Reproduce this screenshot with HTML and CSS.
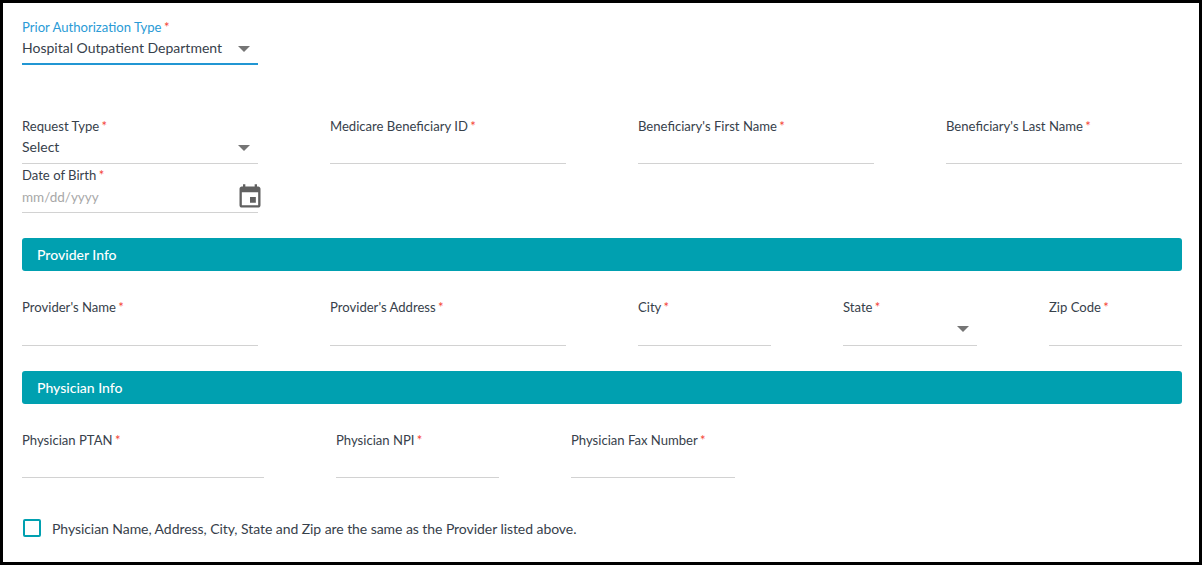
FILE: index.html
```html
<!DOCTYPE html>
<html lang="en">

<head>
    <meta charset="UTF-8">
    <title>Prior Authorization</title>
    <link rel="stylesheet" href="styles.css">
</head>

<body>

    <form class="page">
        <div class="field field-type">
            <label class="label-active">Prior Authorization Type <span class="req">*</span></label>
            <div class="control control-active">
                <span>Hospital Outpatient Department</span>
                <i class="arrow"></i>
            </div>
        </div>

        <div class="row-four row-request">
            <div class="field">
                <label>Request Type <span class="req">*</span></label>
                <div class="control"><span>Select</span><i class="arrow"></i></div>
            </div>
            <div class="field">
                <label>Medicare Beneficiary ID <span class="req">*</span></label>
                <div class="control"><input type="text"></div>
            </div>
            <div class="field">
                <label>Beneficiary's First Name <span class="req">*</span></label>
                <div class="control"><input type="text"></div>
            </div>
            <div class="field">
                <label>Beneficiary's Last Name <span class="req">*</span></label>
                <div class="control"><input type="text"></div>
            </div>
            <div class="field field-dob">
                <label>Date of Birth <span class="req">*</span></label>
                <div class="control">
                    <input type="text" placeholder="mm/dd/yyyy">
                    <svg class="calendar" viewBox="0 0 24 24" width="28" height="28">
                        <path d="M17 12h-5v5h5v-5zM16 1v2H8V1H6v2H5c-1.11 0-1.99.9-1.99 2L3 19c0 1.1.89 2 2 2h14c1.1 0 2-.9 2-2V5c0-1.1-.9-2-2-2h-1V1h-2zm3 18H5V8h14v11z" />
                    </svg>
                </div>
            </div>
        </div>

        <h3 class="section-bar bar-provider">Provider Info</h3>

        <div class="row-provider">
            <div class="field">
                <label>Provider's Name <span class="req">*</span></label>
                <div class="control"><input type="text"></div>
            </div>
            <div class="field">
                <label>Provider's Address <span class="req">*</span></label>
                <div class="control"><input type="text"></div>
            </div>
            <div class="field">
                <label>City <span class="req">*</span></label>
                <div class="control"><input type="text"></div>
            </div>
            <div class="field">
                <label>State <span class="req">*</span></label>
                <div class="control"><span></span><i class="arrow"></i></div>
            </div>
            <div class="field">
                <label>Zip Code <span class="req">*</span></label>
                <div class="control"><input type="text"></div>
            </div>
        </div>

        <h3 class="section-bar bar-physician">Physician Info</h3>

        <div class="row-physician">
            <div class="field">
                <label>Physician PTAN <span class="req">*</span></label>
                <div class="control"><input type="text"></div>
            </div>
            <div class="field">
                <label>Physician NPI <span class="req">*</span></label>
                <div class="control"><input type="text"></div>
            </div>
            <div class="field">
                <label>Physician Fax Number <span class="req">*</span></label>
                <div class="control"><input type="text"></div>
            </div>
        </div>

        <label class="same-as">
            <i class="check-box"></i>
            Physician Name, Address, City, State and Zip are the same as the Provider listed above.
        </label>
    </form>

</body>

</html>
```

FILE: styles.css
```css
* {
    margin: 0;
    padding: 0;
    box-sizing: border-box;
}

body {
    font-family: 'Lato', sans-serif;
    font-size: 14px;
    color: #37414b;
    background: white;
}

.page {
    width: 1202px;
    height: 565px;
    border: 3px solid black;
    padding: 14px 17px 0 19px;
    overflow: hidden;
}

.field {
    display: flex;
    flex-direction: column;
    height: 48px;
}

.field label {
    height: 20px;
    font-size: 13.1px;
    line-height: 20px;
    white-space: nowrap;
}

.req {
    color: #f44336;
    margin-left: -1px;
}

.control {
    flex: 1;
    display: flex;
    justify-content: space-between;
    align-items: flex-start;
    border-bottom: 1px solid #d2d2d2;
    line-height: 22px;
}

.control input {
    width: 100%;
    border: none;
    outline: none;
    height: 23px;
    font: inherit;
    color: inherit;
    background: none;
}

.control input::placeholder {
    color: #a8a8a8;
    font-size: 13.5px;
    opacity: 1;
}

.field-type {
    width: 236px;
}

.label-active {
    color: #2a9bd6;
}

.control-active {
    border-bottom: 2px solid #2196d3;
}

.arrow {
    width: 0;
    height: 0;
    margin: 9px 8px 0 0;
    border-left: 6px solid transparent;
    border-right: 6px solid transparent;
    border-top: 6px solid #757575;
}

.calendar {
    flex: none;
    margin: -2px -6px 0 0;
    fill: #616161;
}

.row-four {
    display: grid;
    grid-template-columns: repeat(4, 236px);
    column-gap: 72px;
    row-gap: 1px;
    margin-top: 51px;
}

.section-bar {
    height: 33px;
    line-height: 33px;
    padding-left: 15px;
    background: #00a0b0;
    color: white;
    font-size: 14px;
    font-weight: 500;
    border-radius: 3px;
}

.bar-provider {
    margin-top: 25px;
}

.bar-physician {
    margin-top: 25px;
}

.row-provider {
    display: grid;
    grid-template-columns: 236px 236px 133px 134px 133px;
    column-gap: 72px;
    margin-top: 26px;
}

.row-provider .field {
    height: 49px;
}

.row-physician {
    display: grid;
    grid-template-columns: 242px 163px 164px;
    column-gap: 72px;
    margin-top: 26px;
}

.same-as {
    display: flex;
    align-items: center;
    gap: 11px;
    margin: 41px 0 0 1px;
    letter-spacing: -0.06px;
}

.check-box {
    width: 18px;
    height: 18px;
    border: 2px solid #00a0b0;
    border-radius: 2px;
}
```
